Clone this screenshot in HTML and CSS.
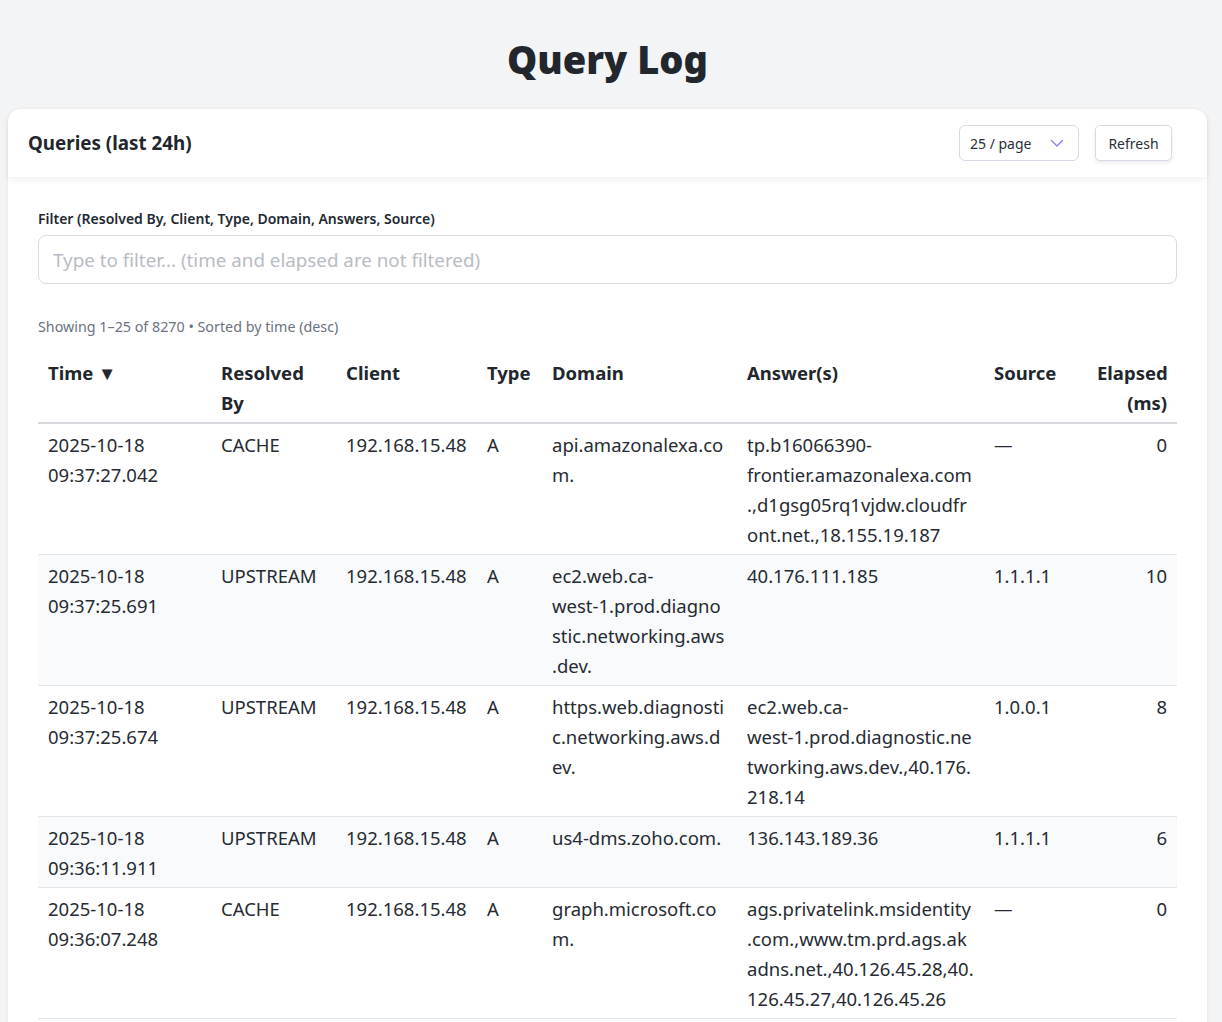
FILE: index.html
```html
<!DOCTYPE html>
<html lang="en">
<head>
<meta charset="utf-8">
<title>Query Log</title>
<link rel="stylesheet" href="styles.css">
</head>
<body>
<h1 class="page-title">Query Log</h1>
<section class="card">
  <header class="card-head">
    <h2 class="card-title">Queries (last 24h)</h2>
    <div class="head-actions">
      <div class="select">
        <span>25 / page</span>
        <svg class="chev" width="14" height="14" viewBox="0 0 14 14"><path d="M1.5 4.5 L7 10 L12.5 4.5" fill="none" stroke="#7b7ff0" stroke-width="1.3" stroke-linecap="round" stroke-linejoin="round"/></svg>
      </div>
      <button class="btn">Refresh</button>
    </div>
  </header>
  <div class="card-body">
    <label class="filter-label">Filter (Resolved By, Client, Type, Domain, Answers, Source)</label>
    <input class="filter-input" type="text" placeholder="Type to filter... (time and elapsed are not filtered)">
    <p class="meta">Showing 1–25 of 8270 • Sorted by time (desc)</p>
    <table class="log">
      <colgroup>
        <col class="c-time"><col class="c-res"><col class="c-client"><col class="c-type"><col class="c-domain"><col class="c-ans"><col class="c-src"><col class="c-el">
      </colgroup>
      <thead>
        <tr>
          <th>Time ▼</th><th>Resolved By</th><th>Client</th><th>Type</th><th>Domain</th><th>Answer(s)</th><th>Source</th><th class="num">Elapsed (ms)</th>
        </tr>
      </thead>
      <tbody>
        <tr><td>2025-10-18 09:37:27.042</td><td>CACHE</td><td>192.168.15.48</td><td>A</td><td>api.amazonalexa.com.</td><td>tp.b16066390-frontier.amazonalexa.com.,d1gsg05rq1vjdw.cloudfront.net.,18.155.19.187</td><td>—</td><td class="num">0</td></tr>
        <tr><td>2025-10-18 09:37:25.691</td><td>UPSTREAM</td><td>192.168.15.48</td><td>A</td><td>ec2.web.ca-<span class="nw">west-1</span>.prod.diagnostic.networking.aws.dev.</td><td>40.176.111.185</td><td>1.1.1.1</td><td class="num">10</td></tr>
        <tr><td>2025-10-18 09:37:25.674</td><td>UPSTREAM</td><td>192.168.15.48</td><td>A</td><td>https.web.diagnostic.networking.aws.dev.</td><td>ec2.web.ca-<span class="nw">west-1</span>.prod.diagnostic.networking.aws.dev.,40.176.218.14</td><td>1.0.0.1</td><td class="num">8</td></tr>
        <tr><td>2025-10-18 09:36:11.911</td><td>UPSTREAM</td><td>192.168.15.48</td><td>A</td><td>us4-dms.zoho.com.</td><td>136.143.189.36</td><td>1.1.1.1</td><td class="num">6</td></tr>
        <tr><td>2025-10-18 09:36:07.248</td><td>CACHE</td><td>192.168.15.48</td><td>A</td><td>graph.microsoft.com.</td><td>ags.privatelink.msidentity.com.,www.tm.prd.ags.akadns.net.,40.126.45.28,40.126.45.27,40.126.45.26</td><td>—</td><td class="num">0</td></tr>
        <tr><td>2025-10-18 09:36:05.112</td><td>UPSTREAM</td><td>192.168.15.48</td><td>A</td><td>login.live.com.</td><td>login.msa.msidentity.com.,20.190.177.20</td><td>1.1.1.1</td><td class="num">12</td></tr>
      </tbody>
    </table>
  </div>
</section>
</body>
</html>
```

FILE: styles.css
```css
* { box-sizing: border-box; }

body {
  margin: 0;
  padding: 34px 15px 20px 8px;
  background: #f3f4f6;
  color: #1f2937;
  font-family: "Noto Sans", "Open Sans", sans-serif;
}

.page-title {
  margin: 0 0 24px;
  text-align: center;
  font-size: 38px;
  line-height: 51px;
  font-weight: 900;
  color: #22262d;
}

.card {
  background: #fff;
  border-radius: 13px;
  box-shadow: 0 1px 4px rgba(0,0,0,0.07);
}

.card-head {
  position: relative;
  height: 68px;
  padding: 0 35px 0 20px;
  display: flex;
  align-items: center;
  justify-content: space-between;
  border-radius: 13px 13px 0 0;
  box-shadow: 0 3px 7px rgba(0,0,0,0.06);
}

.card-title {
  margin: 0;
  font-size: 18.8px;
  font-weight: 700;
  color: #22262d;
}

.head-actions {
  display: flex;
  gap: 16px;
  align-items: center;
}

.select {
  width: 120px;
  height: 36px;
  border: 1px solid #d8d9e6;
  border-radius: 6px;
  display: flex;
  align-items: center;
  justify-content: space-between;
  padding: 0 14px 0 10px;
  font-size: 14px;
  color: #2a2f37;
}

.chev { display: block; }

.btn {
  width: 77px;
  height: 36px;
  border: 1px solid #d8d9e6;
  border-radius: 5px;
  background: #fff;
  font-family: inherit;
  font-size: 14px;
  color: #2a2f37;
  box-shadow: 0 2px 4px rgba(0,0,0,0.08);
  padding: 0;
}

.card-body {
  padding: 32px 30px 20px;
}

.filter-label {
  display: block;
  font-size: 14px;
  line-height: 19px;
  font-weight: 600;
  color: #222831;
  margin-bottom: 7px;
}

.filter-input {
  display: block;
  width: 100%;
  height: 49px;
  border: 1px solid #d9dbe0;
  border-radius: 8px;
  padding: 0 14px;
  font-family: inherit;
  font-size: 18.8px;
  color: #1f2937;
  outline: none;
}
.filter-input::placeholder { color: #b8bcc4; }

.meta {
  margin: 33px 0 19px;
  font-size: 14.3px;
  color: #6b7280;
}

.log {
  width: 100%;
  table-layout: fixed;
  border-collapse: collapse;
  font-size: 18.5px;
  line-height: 30px;
}

.c-time { width: 173px; }
.c-res { width: 125px; }
.c-client { width: 141px; }
.c-type { width: 65px; }
.c-domain { width: 195px; }
.c-ans { width: 247px; }
.c-src { width: 103px; }
.c-el { width: 90px; }

.log th {
  text-align: left;
  vertical-align: top;
  font-weight: 700;
  padding: 3px 10px 4px;
  border-bottom: 2px solid #d6d9de;
  color: #22262d;
}

.log td {
  vertical-align: top;
  padding: 6px 10px 4px;
  border-bottom: 1px solid #e3e5e9;
  overflow-wrap: anywhere;
  color: #262b33;
}

.log td:nth-child(3) { padding-right: 6px; }

.log tbody tr:nth-child(even) td { background: #f9fafb; }

.log .num { text-align: right; }

.nw { white-space: nowrap; }
```
